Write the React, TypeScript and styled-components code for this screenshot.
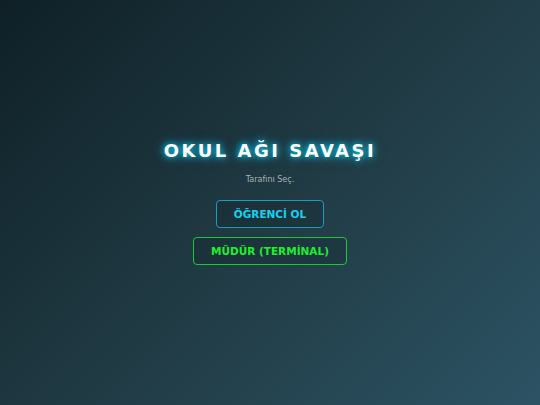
import styled, { createGlobalStyle } from 'styled-components';

const GlobalStyle = createGlobalStyle`
  html, body {
    margin: 0;
    padding: 0;
    height: 100%;
  }
  #root {
    height: 100%;
  }
`;

const Screen = styled.div`
  display: flex;
  flex-direction: column;
  align-items: center;
  justify-content: center;
  height: 100vh;
  box-sizing: border-box;
  background: linear-gradient(135deg, #0f2027 0%, #203a43 50%, #2c5364 100%);
  font-family: "DejaVu Sans", Verdana, sans-serif;
`;

const Title = styled.h1`
  margin: 0 0 14px;
  font-size: 18px;
  font-weight: bold;
  letter-spacing: 2.5px;
  color: #ffffff;
  text-shadow: 0 0 6px #00d2ff, 0 0 12px rgba(0, 210, 255, 0.6);
`;

const Subtitle = styled.p`
  margin: 0 0 16px;
  font-size: 8px;
  color: #a8b4b8;
`;

const Choices = styled.div`
  display: flex;
  flex-direction: column;
  align-items: center;
  gap: 9px;
`;

const ChoiceButton = styled.button<{ $tone: string; $edge: string }>`
  padding: 7px 17px;
  border: 1.5px solid ${(p) => p.$edge};
  border-radius: 4px;
  background: rgba(0, 0, 0, 0.12);
  color: ${(p) => p.$tone};
  font-family: "DejaVu Sans", Verdana, sans-serif;
  font-size: 10.5px;
  font-weight: bold;
  line-height: 12px;
  cursor: pointer;
`;

export default function App() {
  return (
    <>
      <GlobalStyle />
      <Screen>
        <Title>OKUL AĞI SAVAŞI</Title>
        <Subtitle>Tarafını Seç.</Subtitle>
        <Choices>
          <ChoiceButton $tone="#1ad0f0" $edge="#1c9cbc">ÖĞRENCİ OL</ChoiceButton>
          <ChoiceButton $tone="#1ef02e" $edge="#22c43a">MÜDÜR (TERMİNAL)</ChoiceButton>
        </Choices>
      </Screen>
    </>
  );
}
